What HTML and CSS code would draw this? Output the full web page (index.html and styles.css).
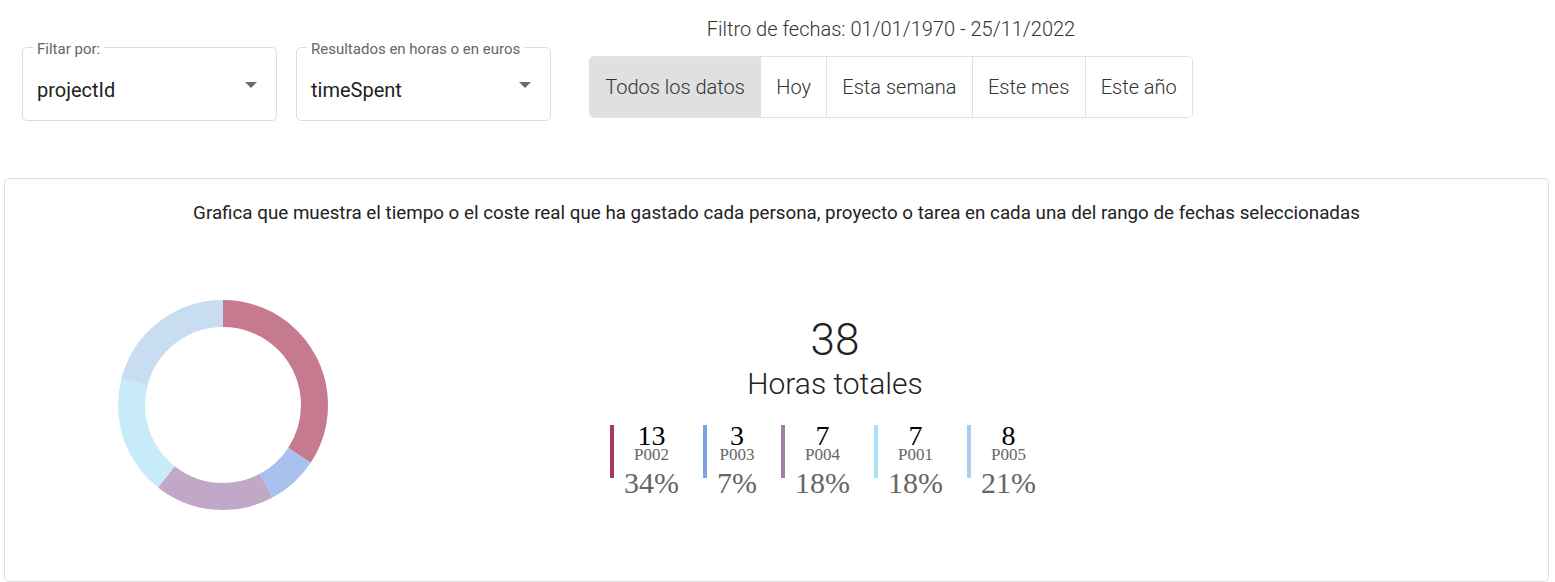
FILE: index.html
```html
<!DOCTYPE html>
<html lang="es">
<head>
<meta charset="utf-8">
<title>Gráfica</title>
<link rel="stylesheet" href="styles.css">
</head>
<body>
<div class="page">
  <div class="toolbar">
    <fieldset class="select">
      <legend class="select-label">Filtar por:</legend>
      <div class="select-row"><span class="select-value">projectId</span><span class="select-arrow"></span></div>
    </fieldset>
    <fieldset class="select">
      <legend class="select-label">Resultados en horas o en euros</legend>
      <div class="select-row"><span class="select-value">timeSpent</span><span class="select-arrow"></span></div>
    </fieldset>
    <div class="date-filter">
      <div class="date-title">Filtro de fechas: 01/01/1970 - 25/11/2022</div>
      <div class="btn-group">
        <button class="btn active">Todos los datos</button>
        <button class="btn">Hoy</button>
        <button class="btn">Esta semana</button>
        <button class="btn">Este mes</button>
        <button class="btn">Este año</button>
      </div>
    </div>
  </div>

  <section class="card">
    <h2 class="card-title">Grafica que muestra el tiempo o el coste real que ha gastado cada persona, proyecto o tarea en cada una del rango de fechas seleccionadas</h2>
    <div class="chart">
      <div class="donut-col">
        <svg class="donut" width="210" height="210" viewBox="0 0 210 210">
          <g transform="rotate(-90 105 105)" fill="none" stroke-width="27">
            <circle cx="105" cy="105" r="91.5" stroke="#c67a8f" stroke-dasharray="196.7 1000" stroke-dashoffset="0"/>
            <circle cx="105" cy="105" r="91.5" stroke="#a8c1ee" stroke-dasharray="45.4 1000" stroke-dashoffset="-196.7"/>
            <circle cx="105" cy="105" r="91.5" stroke="#c1a8c6" stroke-dasharray="105.9 1000" stroke-dashoffset="-242.1"/>
            <circle cx="105" cy="105" r="91.5" stroke="#c7ebf8" stroke-dasharray="105.9 1000" stroke-dashoffset="-348.0"/>
            <circle cx="105" cy="105" r="91.5" stroke="#c9ddf2" stroke-dasharray="121.0 1000" stroke-dashoffset="-453.9"/>
          </g>
        </svg>
      </div>
      <div class="summary">
        <div class="total-value">38</div>
        <div class="total-label">Horas totales</div>
        <div class="legend">
          <div class="legend-item"><span class="item-color c1"></span><div class="item-text"><div class="item-value">13</div><div class="item-label">P002</div><div class="item-percent">34%</div></div></div>
          <div class="legend-item"><span class="item-color c2"></span><div class="item-text"><div class="item-value">3</div><div class="item-label">P003</div><div class="item-percent">7%</div></div></div>
          <div class="legend-item"><span class="item-color c3"></span><div class="item-text"><div class="item-value">7</div><div class="item-label">P004</div><div class="item-percent">18%</div></div></div>
          <div class="legend-item"><span class="item-color c4"></span><div class="item-text"><div class="item-value">7</div><div class="item-label">P001</div><div class="item-percent">18%</div></div></div>
          <div class="legend-item"><span class="item-color c5"></span><div class="item-text"><div class="item-value">8</div><div class="item-label">P005</div><div class="item-percent">21%</div></div></div>
        </div>
      </div>
    </div>
  </section>
</div>
</body>
</html>
```

FILE: styles.css
```css
html, body {
  margin: 0;
  padding: 0;
  background: #fff;
  overflow: hidden;
}
body {
  font-family: Roboto, "Liberation Sans", sans-serif;
  color: #222;
}
.page {
  width: 1555px;
  height: 582px;
}
.toolbar {
  display: flex;
  align-items: flex-start;
  padding: 17px 0 0 22px;
}
.select {
  box-sizing: border-box;
  width: 255px;
  margin: 19.5px 19px 0 0;
  padding: 0 19px 0 14px;
  border: 1px solid #dcdcdc;
  border-radius: 5px;
  min-width: 0;
}
.select + .select {
  margin-right: 38px;
}
.select-label {
  margin-left: -4px;
  padding: 4px 4px 0;
  font-size: 15px;
  line-height: 17px;
  color: #666;
  white-space: nowrap;
}
.select-row {
  display: flex;
  justify-content: space-between;
  align-items: flex-start;
  height: 62.5px;
}
.select-value {
  font-size: 20px;
  line-height: 24px;
  margin-top: 20.5px;
  color: #222;
}
.select-arrow {
  width: 0;
  height: 0;
  margin-top: 24.5px;
  border-left: 6px solid transparent;
  border-right: 6px solid transparent;
  border-top: 6px solid #6b6b6b;
}
.date-filter {
  display: flex;
  flex-direction: column;
  align-items: center;
}
.date-title {
  font-size: 20px;
  font-weight: 300;
  line-height: 24px;
  color: #333;
}
.btn-group {
  display: flex;
  margin-top: 15px;
  border: 1px solid #e2e2e2;
  border-radius: 5px;
  overflow: hidden;
}
.btn {
  height: 60px;
  padding: 0 15.2px;
  margin: 0;
  border: 0;
  border-left: 1px solid #e2e2e2;
  background: #fff;
  font-family: Roboto, "Liberation Sans", sans-serif;
  font-size: 20px;
  font-weight: 300;
  color: #333;
}
.btn:first-child {
  border-left: 0;
}
.btn.active {
  background: #e0e0e0;
}
.card {
  box-sizing: border-box;
  width: 1545px;
  height: 404px;
  margin: 57px 0 0 4px;
  border: 1px solid #dedede;
  border-radius: 5px;
  padding-top: 22px;
}
.card-title {
  margin: 0;
  text-align: center;
  font-size: 18.8px;
  font-weight: 400;
  line-height: 24px;
  color: #222;
}
.chart {
  display: grid;
  grid-template-columns: 436px 788px;
  align-items: start;
  padding-top: 75px;
}
.donut-col {
  display: flex;
  justify-content: center;
}
.donut {
  display: block;
}
.summary {
  display: flex;
  flex-direction: column;
  align-items: center;
  margin-top: 14px;
}
.total-value {
  font-size: 44px;
  font-weight: 300;
  line-height: 52px;
  color: #222;
}
.total-label {
  font-size: 30px;
  font-weight: 300;
  line-height: 36px;
  color: #222;
}
.legend {
  display: flex;
  justify-content: center;
  margin-top: 22px;
  font-family: "Liberation Serif", "Times New Roman", serif;
}
.legend-item {
  display: flex;
  align-items: flex-start;
  margin-right: 24px;
}
.item-color {
  width: 4px;
  height: 53px;
  margin-top: 1px;
  margin-right: 10px;
}
.c1 { background: #a8385d; }
.c2 { background: #7aa3e5; }
.c3 { background: #a27ea8; }
.c4 { background: #aae3f5; }
.c5 { background: #adcded; }
.item-text {
  display: flex;
  flex-direction: column;
  align-items: center;
}
.item-value {
  font-size: 28px;
  line-height: 24px;
  color: #000;
}
.item-label {
  font-size: 17px;
  line-height: 14.5px;
  color: #666;
}
.item-percent {
  font-size: 30px;
  line-height: 32px;
  margin-top: 4px;
  color: #666;
}
```
